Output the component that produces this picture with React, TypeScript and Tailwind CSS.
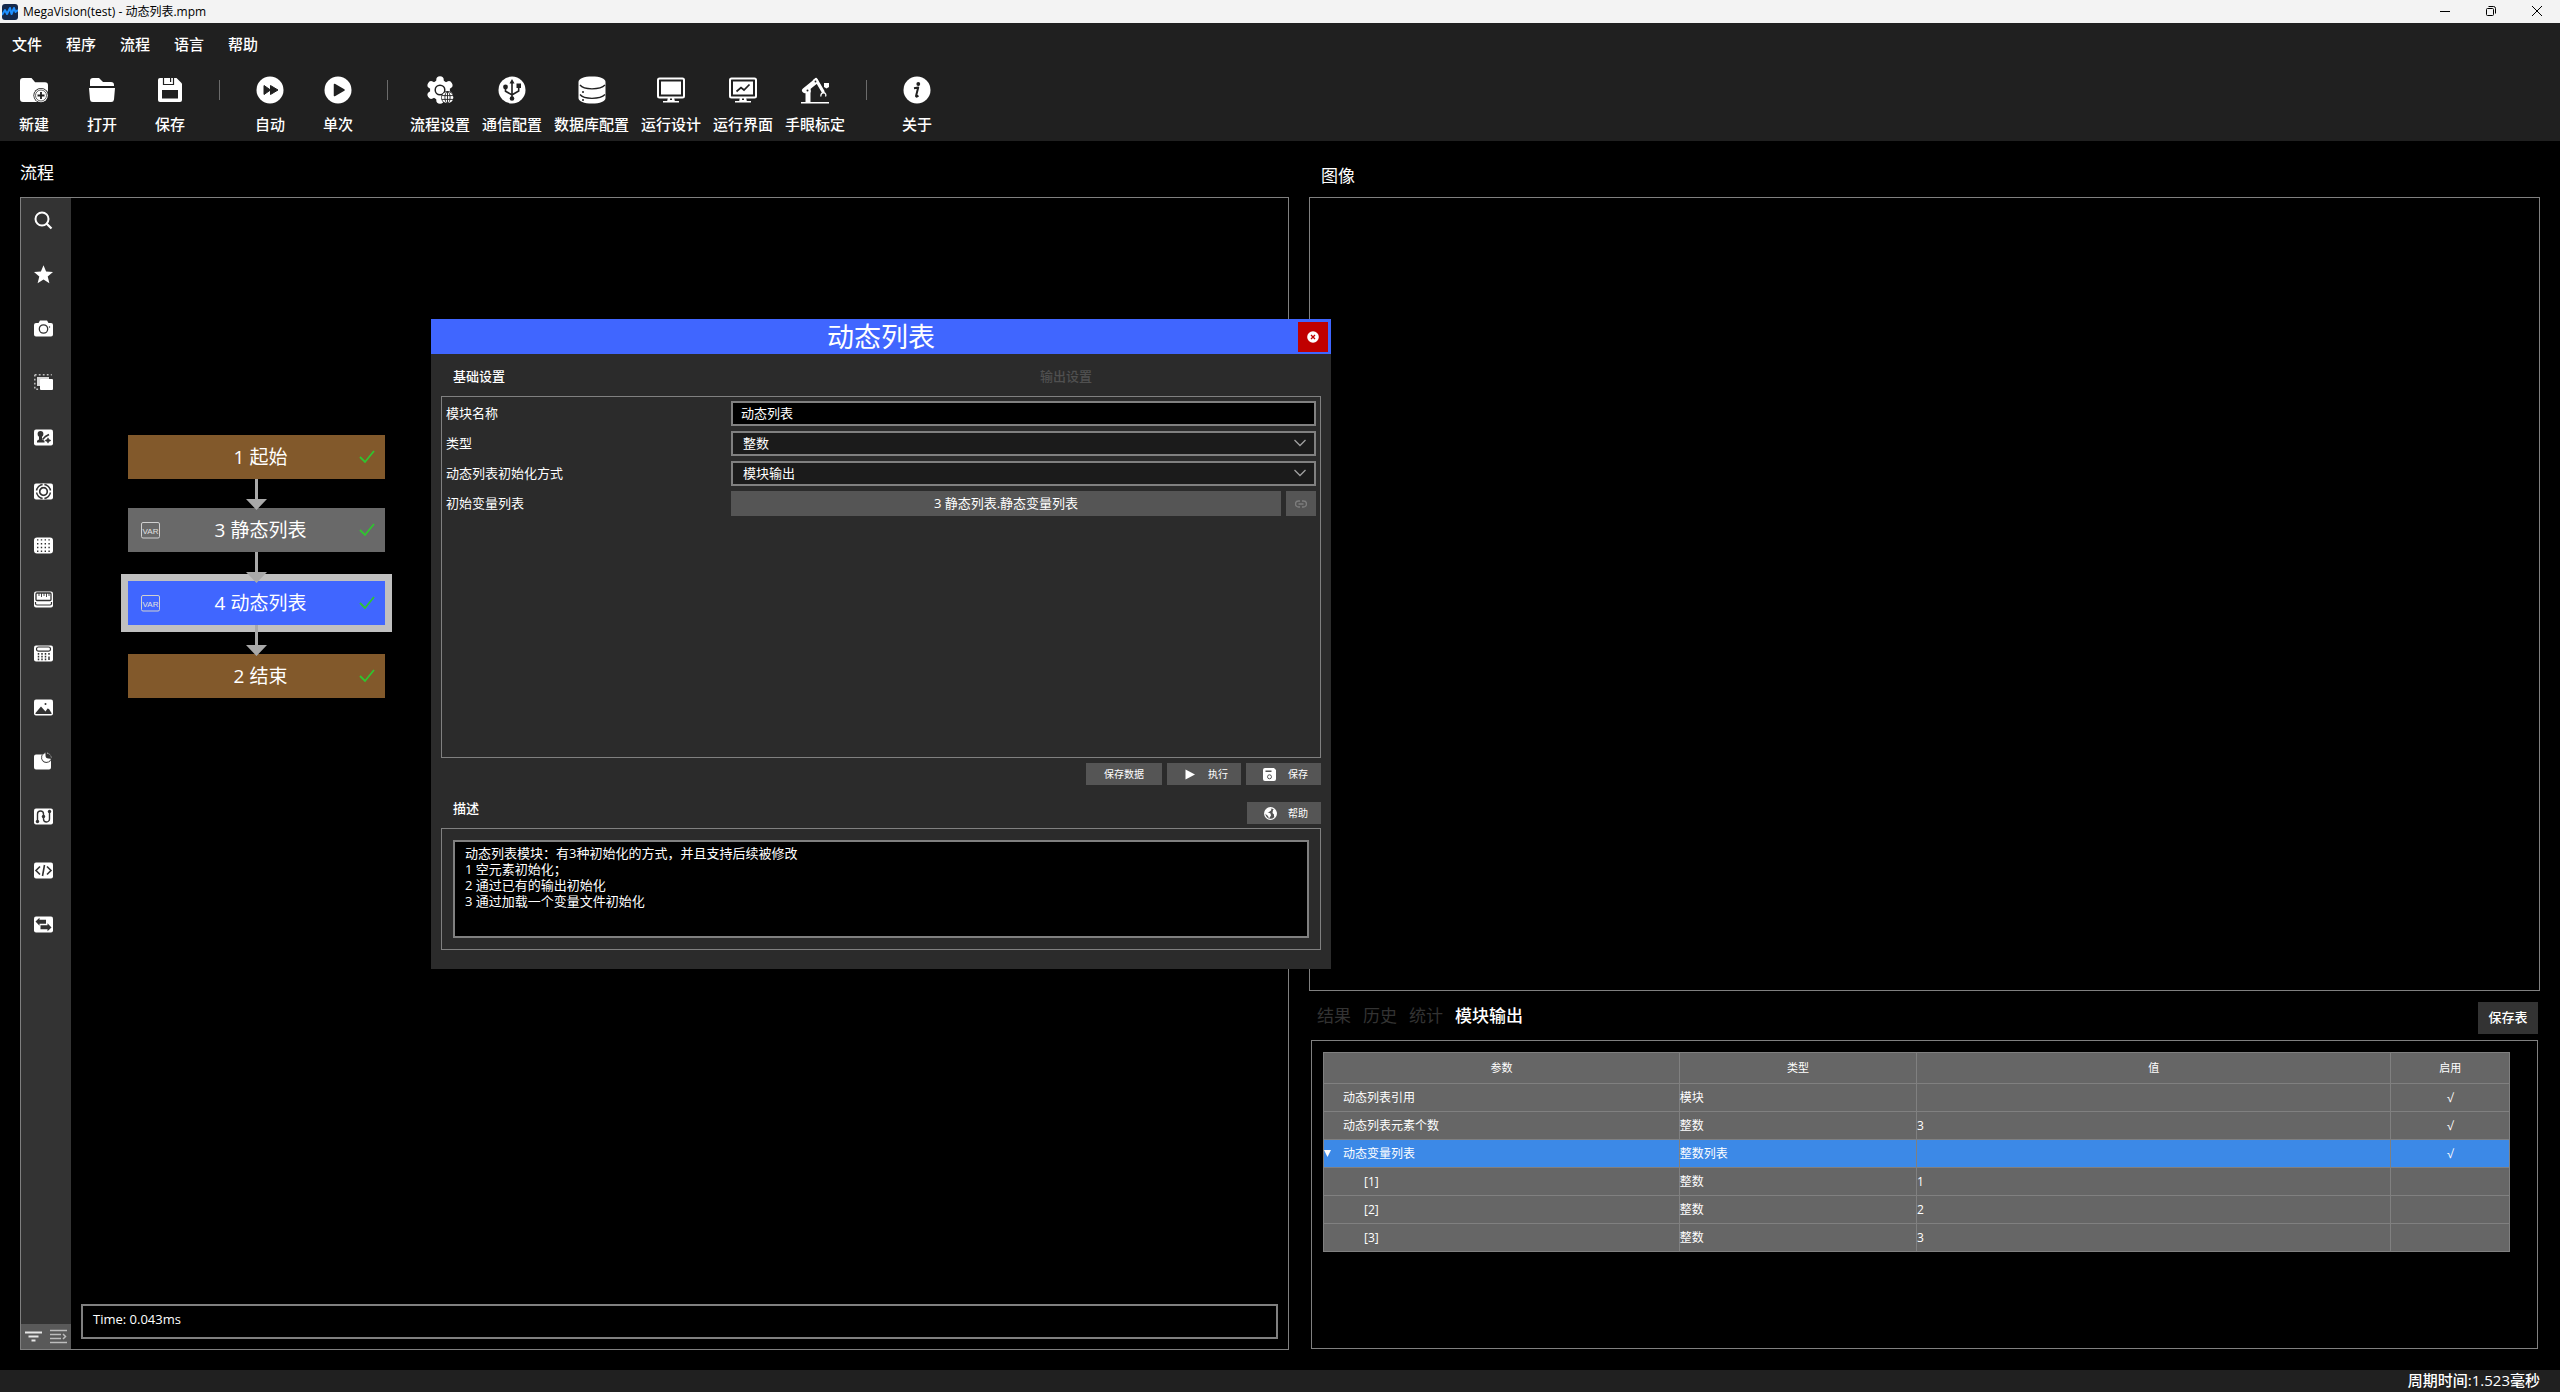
import React from "react";

const BAR = "#202020";
const SIDE = "#333333";

/* ---------- Toolbar icons (28 x 28) ---------- */

function ToolSvg({ children }: { children: React.ReactNode }) {
  return (
    <svg viewBox="0 0 28 28" className="size-7" fill="white" aria-hidden="true">
      {children}
    </svg>
  );
}

const NewIcon = (
  <ToolSvg>
    <path d="M3 2h8.5l3.600 4.200H25a3 3 0 0 1 3 3V26H3a3 3 0 0 1-3-3V5a3 3 0 0 1 3-3z" />
    <path d="M25 24.500L28 22v6h-6z" fill={BAR} />
    <circle cx="21" cy="19.500" r="7.600" fill={BAR} />
    <circle cx="21" cy="19.500" r="6.800" />
    <circle cx="21" cy="19.500" r="5.500" fill="white" stroke={BAR} strokeWidth="0.700" />
    <path d="M21 16v7M17.500 19.500h7" stroke={BAR} strokeWidth="1.800" />
  </ToolSvg>
);

const OpenIcon = (
  <ToolSvg>
    <path d="M2 10V5a3 3 0 0 1 3-3h6l4 4h8a3 3 0 0 1 3 3v1z" />
    <path d="M1 12h26l-1 11.500a2.800 2.800 0 0 1-2.800 2.500H4.800A2.800 2.800 0 0 1 2 23.500z" />
  </ToolSvg>
);

const SaveIcon = (
  <ToolSvg>
    <path d="M2 4a2 2 0 0 1 2-2h16.500L26 7.500V24a2 2 0 0 1-2 2H4a2 2 0 0 1-2-2z" />
    <path d="M7.500 2v6.500h10V2" fill="none" stroke={BAR} strokeWidth="1.200" />
    <rect x="14" y="2" width="1.200" height="4" fill={BAR} />
    <rect x="6" y="14" width="16" height="8.500" fill={BAR} />
  </ToolSvg>
);

const AutoIcon = (
  <ToolSvg>
    <circle cx="14" cy="14" r="13.500" />
    <path
      d="M8 9.500l6.500 4.500L8 18.500zM14.500 9.500L22 14l-7.500 4.500z"
      fill={BAR}
      stroke={BAR}
      strokeLinejoin="round"
    />
  </ToolSvg>
);

const OnceIcon = (
  <ToolSvg>
    <circle cx="14" cy="14" r="13.500" />
    <path d="M10.500 8.500L20 14l-9.500 5.500z" fill={BAR} stroke={BAR} strokeLinejoin="round" strokeWidth="1.500" />
  </ToolSvg>
);

const FlowSetIcon = (
  <ToolSvg>
    <circle cx="14" cy="14" r="10" />
    <g stroke="white" strokeWidth="7.500" strokeLinecap="round">
      <path d="M14 4v20M5.300 9l17.400 10M22.700 9L5.300 19" />
    </g>
    <circle cx="14" cy="14" r="4.800" stroke={BAR} strokeWidth="1.500" />
    <circle cx="21.500" cy="21.500" r="6.500" fill={BAR} />
    <circle cx="21.500" cy="21.500" r="5.800" />
    <g fill="none" stroke={BAR} strokeWidth="0.900">
      <ellipse cx="21.500" cy="21.500" rx="2.600" ry="5.800" />
      <path d="M21.500 15.700v11.600M16 19.600h11M16 23.400h11" />
    </g>
  </ToolSvg>
);

const CommIcon = (
  <ToolSvg>
    <circle cx="14" cy="14" r="13.500" />
    <g fill={BAR}>
      <circle cx="14" cy="22.500" r="2.300" />
      <path d="M14 3l2.500 4.500h-5z" />
      <circle cx="7.500" cy="11" r="2.400" />
      <rect x="18.500" y="7.500" width="4.500" height="4.500" />
    </g>
    <path
      d="M14 22V6M7.500 12v3.200l6.300 3.600M20.700 11v4l-6.500 3.800"
      fill="none"
      stroke={BAR}
      strokeWidth="1.600"
    />
  </ToolSvg>
);

const DbIcon = (
  <ToolSvg>
    <path d="M.5 6C.5 2.500 6 .5 14 .5S27.500 2.500 27.500 6v16c0 3.500-5.500 5.500-13.500 5.500S.5 25.500.5 22z" />
    <path
      d="M2 9c2 2.700 6 3.800 12 3.800S24.500 11.700 27 9M2 18.500c2 2.700 6 3.800 12 3.800s10.500-1.100 13-3.800"
      fill="none"
      stroke={BAR}
      strokeWidth="1.300"
    />
    <circle cx="5" cy="16" r="1" fill={BAR} />
    <circle cx="5" cy="24" r="1" fill={BAR} />
  </ToolSvg>
);

const DesignIcon = (
  <ToolSvg>
    <rect x="1" y="2.500" width="26" height="19" rx="1.500" fill="none" stroke="white" strokeWidth="2" />
    <rect x="4" y="5.500" width="20" height="13" />
    <path d="M11 21h6l.8 4H22v1.500H6V25h4.200z" />
    <rect x="13" y="22.500" width="2" height="1.500" fill={BAR} />
  </ToolSvg>
);

const ScreenIcon = (
  <ToolSvg>
    <rect x="1" y="2.500" width="26" height="19" rx="1.500" fill="none" stroke="white" strokeWidth="2" />
    <rect x="4" y="5.500" width="20" height="13" />
    <path d="M7.500 15.500l4.500-4 3 2.500 5.500-5.500" fill="none" stroke={BAR} strokeWidth="1.700" />
    <path d="M11 21h6l.8 4H22v1.500H6V25h4.200z" />
    <rect x="13" y="22.500" width="2" height="1.500" fill={BAR} />
  </ToolSvg>
);

const RobotIcon = (
  <ToolSvg>
    <rect x="0" y="26" width="28" height="1.500" />
    <path d="M4.500 26V15h5v11z" />
    <path d="M3.500 14.500L14 6" stroke="white" strokeWidth="5" strokeLinecap="round" />
    <path d="M15 3.500l7 12" stroke="white" strokeWidth="3.200" strokeLinecap="round" />
    <circle cx="6.500" cy="14.500" r="3.300" />
    <circle cx="14.500" cy="5.500" r="2.800" />
    <circle cx="6.500" cy="14.500" r="1" fill={BAR} />
    <circle cx="14.500" cy="5.500" r="0.900" fill={BAR} />
    <path d="M22.500 16.500c-2 .5-3 2-2.500 4M22.500 16.500c2 .5 3 2 2 4" fill="none" stroke="white" strokeWidth="1.300" />
    <path d="M23 7h5v4l-2.500 1.500L23 11z" />
  </ToolSvg>
);

const AboutIcon = (
  <ToolSvg>
    <circle cx="14" cy="14" r="13.500" />
    <circle cx="15.300" cy="8" r="1.900" fill={BAR} />
    <path
      d="M11 12.200l4.200-.7-2.100 8.200c-.3 1.300.7 1.300 2.300-.2"
      fill="none"
      stroke={BAR}
      strokeWidth="2"
      strokeLinejoin="round"
    />
  </ToolSvg>
);

/* ---------- Sidebar icons (19 x 19) ---------- */

function SideSvg({ children }: { children: React.ReactNode }) {
  return (
    <svg viewBox="0 0 19 19" className="size-[19px]" fill="white" aria-hidden="true">
      {children}
    </svg>
  );
}

const Plate = <rect x="0" y="1.500" width="19" height="16" rx="2" />;

const sideTools: { name: string; icon: React.ReactNode }[] = [
  {
    name: "搜索",
    icon: (
      <SideSvg>
        <circle cx="8" cy="8" r="6.500" fill="none" stroke="white" strokeWidth="2" />
        <path d="M12.500 12.500l5 5" stroke="white" strokeWidth="2.200" />
      </SideSvg>
    ),
  },
  {
    name: "收藏",
    icon: (
      <SideSvg>
        <path d="M9.500.3l2.600 6.300 6.900.5-5.300 4.400 1.700 6.800-5.900-3.700-5.900 3.700 1.700-6.800L0 7.100l6.900-.5z" />
      </SideSvg>
    ),
  },
  {
    name: "相机",
    icon: (
      <SideSvg>
        <path d="M2 4h2.500L6 1.500h7L14.500 4H17a2 2 0 0 1 2 2v9.500a2 2 0 0 1-2 2H2a2 2 0 0 1-2-2V6a2 2 0 0 1 2-2z" />
        <circle cx="9.500" cy="10" r="4.200" fill="none" stroke={SIDE} strokeWidth="1.300" />
        <circle cx="15.500" cy="8" r="0.700" fill={SIDE} />
      </SideSvg>
    ),
  },
  {
    name: "区域",
    icon: (
      <SideSvg>
        <path
          d="M.8 1.800h17M.8 1.800v14.500h5"
          fill="none"
          stroke="#bdbdbd"
          strokeWidth="1.500"
          strokeDasharray="1.800 2.200"
        />
        <rect x="3" y="4" width="12" height="9" fill="#d8d8d8" />
        <rect x="6" y="6" width="13" height="11" rx="1" />
      </SideSvg>
    ),
  },
  {
    name: "标定",
    icon: (
      <SideSvg>
        {Plate}
        <circle cx="6.500" cy="6" r="2.900" fill={SIDE} />
        <path d="M5 8h3v3.500l2.500 1.200V14.500H3v-1.800L5 11.500z" fill={SIDE} />
        <path d="M8.500 11.500l3-3 3.500-2" fill="none" stroke={SIDE} strokeWidth="1.600" />
        <path d="M14 9.800l1 1.800 2 .9-2 .9-1 1.800-1-1.800-2-.9 2-.9z" fill={SIDE} stroke={SIDE} strokeWidth="0.500" />
      </SideSvg>
    ),
  },
  {
    name: "定位",
    icon: (
      <SideSvg>
        {Plate}
        <circle cx="9.500" cy="9.500" r="7" fill="none" stroke={SIDE} strokeWidth="1.500" />
        <circle cx="9.500" cy="9.500" r="3.800" fill="none" stroke={SIDE} strokeWidth="1.700" />
        <path d="M9.500 1.500v3M9.500 14.500v3M1 9.500h3.500M14.500 9.500H18" stroke="white" strokeWidth="1.800" />
      </SideSvg>
    ),
  },
  {
    name: "阵列",
    icon: (
      <SideSvg>
        <rect x="0" y="1.500" width="19" height="16" rx="3" />
        <g stroke={SIDE} strokeWidth="1.400" strokeDasharray="1.400 2.400">
          <path d="M3 3.900h14M3 7.700h14M3 11.500h14M3 15.300h14" />
        </g>
      </SideSvg>
    ),
  },
  {
    name: "测量",
    icon: (
      <SideSvg>
        {Plate}
        <rect x="2" y="3" width="15" height="7.500" rx="1" fill="none" stroke={SIDE} strokeWidth="1.300" />
        <path d="M5 3v3M7.500 3v4M10 3v3M12.500 3v4M15 3v3" stroke={SIDE} strokeWidth="0.900" />
        <path d="M1.500 12v1.500q0 1.500 1.500 1.500h13q1.500 0 1.500-1.500V12" fill="none" stroke={SIDE} strokeWidth="1.200" />
      </SideSvg>
    ),
  },
  {
    name: "计算",
    icon: (
      <SideSvg>
        {Plate}
        <rect x="2.500" y="3" width="14" height="4.200" rx="2" fill="none" stroke={SIDE} strokeWidth="1.200" />
        <path
          d="M4.500 9v7.500M8 9v7.500M11.500 9v7.500M15 9v2.500"
          stroke={SIDE}
          strokeWidth="1.500"
          strokeDasharray="1.700 1.100"
        />
        <path d="M15 12.500v3.500" stroke={SIDE} strokeWidth="1.500" />
      </SideSvg>
    ),
  },
  {
    name: "图像",
    icon: (
      <SideSvg>
        {Plate}
        <path d="M1.500 15l5.500-6.500 4.500 5 2-3 1.500.5 2.500 4v1H1.500z" fill={SIDE} />
        <circle cx="11.500" cy="6" r="1" fill={SIDE} />
      </SideSvg>
    ),
  },
  {
    name: "缺陷",
    icon: (
      <SideSvg>
        <path d="M2 2.500h6a4.800 4.800 0 0 0 9 6v7a2 2 0 0 1-2 2H2a2 2 0 0 1-2-2v-11a2 2 0 0 1 2-2z" />
        <circle cx="12.500" cy="5.500" r="4.600" fill="white" stroke="#9a9a9a" strokeWidth="1" strokeDasharray="1.500 1.200" />
        <path d="M11.500.5h7v6.500l-4-.5q-3 0-3-3z" fill={SIDE} />
        <path d="M13 1.200q3.500.5 4.300 4.300" fill="none" stroke="#bdbdbd" strokeDasharray="1.500 1.200" />
      </SideSvg>
    ),
  },
  {
    name: "流程",
    icon: (
      <SideSvg>
        {Plate}
        <path
          d="M3.500 14.500V7a3 3 0 0 1 6 0v5a3 3 0 0 0 6 0V4.500"
          fill="none"
          stroke={SIDE}
          strokeWidth="1.400"
        />
        <circle cx="3.500" cy="14.500" r="1.700" fill={SIDE} />
        <circle cx="9.500" cy="9.500" r="1.700" fill={SIDE} />
        <circle cx="15.500" cy="4.500" r="1.700" fill={SIDE} />
      </SideSvg>
    ),
  },
  {
    name: "脚本",
    icon: (
      <SideSvg>
        {Plate}
        <path d="M6 5.500l-4 4 4 4M13 5.500l4 4-4 4M10.500 4l-2 11" fill="none" stroke={SIDE} strokeWidth="1.600" />
      </SideSvg>
    ),
  },
  {
    name: "通信",
    icon: (
      <SideSvg>
        {Plate}
        <path d="M1.500 6.500l4-3.800v2h6.500v4H5.500v2zM17.500 12.500l-4 3.800v-2H6.500v-4h7v-2z" fill={SIDE} />
      </SideSvg>
    ),
  },
];

/* ---------- Menu and toolbar ---------- */

const menus = ["文件", "程序", "流程", "语言", "帮助"];

const toolGroups = [
  [
    { label: "新建", icon: NewIcon },
    { label: "打开", icon: OpenIcon },
    { label: "保存", icon: SaveIcon },
  ],
  [
    { label: "自动", icon: AutoIcon },
    { label: "单次", icon: OnceIcon },
  ],
  [
    { label: "流程设置", icon: FlowSetIcon },
    { label: "通信配置", icon: CommIcon },
    { label: "数据库配置", icon: DbIcon },
    { label: "运行设计", icon: DesignIcon },
    { label: "运行界面", icon: ScreenIcon },
    { label: "手眼标定", icon: RobotIcon },
  ],
  [{ label: "关于", icon: AboutIcon }],
];

function TitleBar() {
  return (
    <div className="flex h-[23px] shrink-0 items-center bg-[#f3f3f3] pl-0.5 text-xs text-black">
      <svg viewBox="0 0 16 16" className="size-4" aria-hidden="true">
        <rect width="16" height="16" rx="3" fill="#15294b" />
        <path
          d="M0 11l3-5 2 4 3-6 1.500 6L12 4l1.500 4L16 6"
          fill="none"
          stroke="#1e90ff"
          strokeWidth="2"
          strokeLinejoin="round"
        />
      </svg>
      <span className="ml-[5px]">MegaVision(test) - 动态列表.mpm</span>
      <div className="ml-auto flex h-full pb-0.5">
        <button aria-label="最小化" className="flex w-[46px] items-center justify-center">
          <svg viewBox="0 0 10 10" className="size-2.5" fill="none" stroke="black">
            <path d="M0 5.500h10" />
          </svg>
        </button>
        <button aria-label="还原" className="flex w-[46px] items-center justify-center">
          <svg viewBox="0 0 10 10" className="size-2.5" fill="none" stroke="black">
            <rect x="0.500" y="2.500" width="7" height="7" rx="1" />
            <path d="M2.500.5h5a2 2 0 0 1 2 2v5" />
          </svg>
        </button>
        <button aria-label="关闭" className="flex w-[46px] items-center justify-center">
          <svg viewBox="0 0 10 10" className="size-2.5" fill="none" stroke="black">
            <path d="M0 0l10 10M10 0L0 10" />
          </svg>
        </button>
      </div>
    </div>
  );
}

function Header() {
  return (
    <header className="h-[118px] shrink-0 bg-[#202020] text-[15px] font-medium leading-6">
      <nav className="flex gap-6 pl-3 pt-[9px]">
        {menus.map((m) => (
          <button key={m}>{m}</button>
        ))}
      </nav>
      <div className="flex items-start gap-3 pl-1.5 pt-5">
        {toolGroups.map((group, i) => (
          <React.Fragment key={i}>
            {i > 0 && <div className="ml-[9px] mr-2.5 mt-1 h-5 w-px bg-[#6b6b6b]" />}
            {group.map((t) => (
              <button key={t.label} className="flex min-w-14 flex-col items-center gap-2">
                {t.icon}
                {t.label}
              </button>
            ))}
          </React.Fragment>
        ))}
      </div>
    </header>
  );
}

/* ---------- Flow chart ---------- */

const nodes = [
  { label: "1 起始", kind: "end" },
  { label: "3 静态列表", kind: "module" },
  { label: "4 动态列表", kind: "active" },
  { label: "2 结束", kind: "end" },
];

const nodeClass: Record<string, string> = {
  end: "bg-[#82592b]",
  module: "bg-[#696969]",
  active: "bg-[#4066ff] ring-7 ring-[#c0c0c0]",
};

function FlowNode({ label, kind }: { label: string; kind: string }) {
  return (
    <div className={`relative flex h-11 w-[257px] items-center justify-center pl-2 text-[19px] ${nodeClass[kind]}`}>
      {kind !== "end" && (
        <svg viewBox="0 0 19 17" className="absolute left-[13px] h-[17px] w-[19px]" aria-hidden="true">
          <rect x="0.500" y="0.500" width="18" height="15.500" rx="1.500" fill="none" stroke="#d0d0d0" />
          <text
            x="9.500"
            y="12"
            textAnchor="middle"
            fill="#e0e0e0"
            className='font-["Liberation_Sans",sans-serif] text-[8px]'
          >
            VAR
          </text>
        </svg>
      )}
      {label}
      <svg viewBox="0 0 16 14" className="absolute right-2.5 h-3.5 w-4" aria-hidden="true">
        <path d="M1 7l5 5L15 1" fill="none" stroke="#2fc52f" strokeWidth="1.800" />
      </svg>
    </div>
  );
}

function FlowArrow() {
  return (
    <svg viewBox="0 0 21 31" className="relative z-10 -mb-0.5 h-[31px] w-[21px]" fill="#a9a9a9" aria-hidden="true">
      <path d="M9 0h3v20h9L10.500 31 0 20h9z" />
    </svg>
  );
}

function FlowPanel() {
  return (
    <section className="flex min-w-0 flex-[1269] flex-col">
      <h2 className="h-14 pt-5 text-[17px] leading-6">流程</h2>
      <div className="flex flex-1 border border-[#808080]">
        <aside className="flex w-[50px] flex-col justify-between bg-[#333333]">
          <div className="mt-[13px] flex h-[723px] flex-col items-start justify-between pl-[13px]">
            {sideTools.map((t) => (
              <button key={t.name} aria-label={t.name}>
                {t.icon}
              </button>
            ))}
          </div>
          <div className="flex h-[25px] items-center justify-around bg-[#595959]">
            <button aria-label="筛选">
              <svg viewBox="0 0 17 13" className="h-[13px] w-[17px]" fill="none" stroke="#e6e6e6" strokeWidth="2">
                <path d="M0 2.500h17M3.500 6.500h10M6.500 10.500h4" />
              </svg>
            </button>
            <button aria-label="展开">
              <svg viewBox="0 0 17 15" className="h-[15px] w-[17px]" fill="none" stroke="#bdbdbd" strokeWidth="1.500">
                <path d="M0 1.500h17M0 5.500h11M0 9.500h11M0 13.500h17M13 5l2.500 2.500L13 10" />
              </svg>
            </button>
          </div>
        </aside>
        <div className="flex flex-1 flex-col justify-between p-2.5">
          <div className="ml-[47px] mt-[227px] flex w-[257px] flex-col items-center">
            {nodes.map((n, i) => (
              <React.Fragment key={n.label}>
                {i > 0 && <FlowArrow />}
                <FlowNode label={n.label} kind={n.kind} />
              </React.Fragment>
            ))}
          </div>
          <div className="h-[35px] border-2 border-[#808080] px-2.5 pt-[3px] text-[13px] font-medium leading-5">
            Time: 0.043ms
          </div>
        </div>
      </div>
    </section>
  );
}

/* ---------- Image + output ---------- */

const outputTabs = ["结果", "历史", "统计", "模块输出"];

const rows = [
  { name: "动态列表引用", type: "模块", value: "", on: true },
  { name: "动态列表元素个数", type: "整数", value: "3", on: true },
  { name: "动态变量列表", type: "整数列表", value: "", on: true, open: true },
  { name: "[1]", type: "整数", value: "1", child: true },
  { name: "[2]", type: "整数", value: "2", child: true },
  { name: "[3]", type: "整数", value: "3", child: true },
];

function OutputTable() {
  return (
    <table className="w-full table-fixed border-collapse text-xs [&_td]:border [&_td]:border-[#808080] [&_th]:border [&_th]:border-[#808080]">
      <colgroup>
        <col className="w-[30%]" />
        <col className="w-[20%]" />
        <col className="w-[40%]" />
        <col className="w-[10%]" />
      </colgroup>
      <thead>
        <tr className="h-[31px] bg-[#666666] text-[11px]">
          <th className="font-normal">参数</th>
          <th className="font-normal">类型</th>
          <th className="font-normal">值</th>
          <th className="font-normal">启用</th>
        </tr>
      </thead>
      <tbody>
        {rows.map((r) => (
          <tr key={r.name} className={r.open ? "h-7 bg-[#3c89e7]" : "h-7 bg-[#666666]"}>
            <td className={r.child ? "pl-10" : "p-0"}>
              <div className="flex items-center">
                {!r.child && (
                  <span className="w-[19px]">
                    {r.open && (
                      <svg viewBox="0 0 7 7" className="size-[7px]" fill="white" aria-hidden="true">
                        <path d="M0 0h7L3.500 7z" />
                      </svg>
                    )}
                  </span>
                )}
                {r.name}
              </div>
            </td>
            <td className="p-0">{r.type}</td>
            <td className="p-0">{r.value}</td>
            <td className="p-0 text-center">{r.on ? "√" : ""}</td>
          </tr>
        ))}
      </tbody>
    </table>
  );
}

function ResultPanel() {
  return (
    <section className="flex min-w-0 flex-[1231] flex-col pb-px">
      <h2 className="h-14 pl-3 pt-[23px] text-[17px] leading-6">图像</h2>
      <div className="flex-1 border border-[#808080]" />
      <div className="mx-0.5 flex h-[49px] items-center justify-between">
        <div className="flex gap-3 pl-1.5 text-[17px]">
          {outputTabs.map((t) => (
            <button key={t} className={t === "模块输出" ? "font-medium text-white" : "text-[#333333]"}>
              {t}
            </button>
          ))}
        </div>
        <button className="mt-1 h-8 w-[60px] bg-[#333333] text-[13px] font-medium">保存表</button>
      </div>
      <div className="mx-0.5 h-[309px] border border-[#808080] pl-[11px] pr-[27px] pt-[11px]">
        <OutputTable />
      </div>
    </section>
  );
}

/* ---------- Module dialog ---------- */

function SelectBox({ id, value }: { id: string; value: string }) {
  return (
    <div className="relative flex-1">
      <select
        id={id}
        defaultValue={value}
        className="block h-[25px] w-full appearance-none border-2 border-[#808080] bg-[#1b1b1b] px-2.5 text-[13px]"
      >
        <option>{value}</option>
      </select>
      <svg viewBox="0 0 12 8" className="pointer-events-none absolute right-2.5 top-2 h-2 w-3" aria-hidden="true">
        <path d="M.5 1L6 6.500 11.500 1" fill="none" stroke="#a0a0a0" strokeWidth="1.300" />
      </svg>
    </div>
  );
}

const smallBtn = "flex h-[22px] items-center bg-[#555555] text-[10px]";

function ModuleDialog() {
  return (
    <div role="dialog" aria-label="动态列表" className="absolute left-[431px] top-[319px] z-20 w-[900px] bg-[#2b2b2b] pb-[19px] text-[13px]">
      <div className="relative flex h-[35px] items-center justify-center bg-[#4066ff]">
        <h1 className="text-[27px] leading-[35px]">动态列表</h1>
        <button aria-label="关闭" className="absolute right-[3px] top-[3px] flex size-[30px] items-center justify-center bg-[#c00000]">
          <svg viewBox="0 0 12 12" className="size-3" aria-hidden="true">
            <circle cx="6" cy="6" r="5.800" fill="white" />
            <path d="M4 4l4 4M8 4L4 8" stroke="#c00000" strokeWidth="1.300" />
          </svg>
        </button>
      </div>

      <div className="px-2.5">
        <div className="grid h-[42px] grid-cols-[587px_1fr] items-center pl-3 pt-1">
          <button className="justify-self-start font-medium">基础设置</button>
          <button className="justify-self-start font-medium text-[#505050]">输出设置</button>
        </div>

        <div className="flex h-[362px] flex-col gap-[5px] border border-[#808080] p-1">
          <div className="flex items-center">
            <label htmlFor="mod-name" className="w-[285px]">模块名称</label>
            <input
              id="mod-name"
              defaultValue="动态列表"
              className="h-[25px] min-w-0 flex-1 border-2 border-[#808080] bg-black px-2 pb-0.5"
            />
          </div>
          <div className="flex items-center">
            <label htmlFor="mod-type" className="w-[285px]">类型</label>
            <SelectBox id="mod-type" value="整数" />
          </div>
          <div className="flex items-center">
            <label htmlFor="mod-init" className="w-[285px]">动态列表初始化方式</label>
            <SelectBox id="mod-init" value="模块输出" />
          </div>
          <div className="flex items-center">
            <label htmlFor="mod-vars" className="w-[285px]">初始变量列表</label>
            <button id="mod-vars" className="h-[25px] flex-1 bg-[#555555]">3 静态列表.静态变量列表</button>
            <button aria-label="链接" className="ml-[5px] flex h-[25px] w-[30px] items-center justify-center bg-[#555555]">
              <svg viewBox="0 0 12 8" className="h-2 w-3" fill="none" stroke="#7d7d7d" strokeWidth="1.400" aria-hidden="true">
                <path d="M5 1H3.500a3 3 0 0 0 0 6H5M7 1h1.500a3 3 0 0 1 0 6H7M3.500 4h5" />
              </svg>
            </button>
          </div>
        </div>

        <div className="mt-[5px] flex justify-end gap-[5px]">
          <button className={`${smallBtn} w-[76px] justify-center`}>保存数据</button>
          <button className={`${smallBtn} w-[74px] justify-between pl-[18px] pr-[13px]`}>
            <svg viewBox="0 0 10 11" className="h-[11px] w-2.5" fill="white" aria-hidden="true">
              <path d="M.5.5L10 5.500.5 10.500z" />
            </svg>
            执行
          </button>
          <button className={`${smallBtn} w-[75px] justify-between pl-[17px] pr-[13px]`}>
            <svg viewBox="0 0 13 13" className="size-[13px]" fill="white" aria-hidden="true">
              <path d="M2 0h9l2 2v9a2 2 0 0 1-2 2H2a2 2 0 0 1-2-2V2a2 2 0 0 1 2-2z" />
              <rect x="2.500" y="2.500" width="6" height="1.500" fill="#555555" />
              <circle cx="6.500" cy="8.800" r="2" fill="none" stroke="#555555" />
            </svg>
            保存
          </button>
        </div>

        <div className="mt-[17px] flex h-[26px] items-start justify-between pl-3">
          <h3 className="font-medium leading-3">描述</h3>
          <button className={`${smallBtn} w-[74px] justify-between pl-[17px] pr-[13px]`}>
            <svg viewBox="0 0 13 13" className="size-[13px]" aria-hidden="true">
              <circle cx="6.500" cy="6.500" r="5.800" fill="none" stroke="white" strokeWidth="1.300" />
              <path d="M1 4l3.500-3 3 .3-.5 2.200-2 1.500H3.500l3 1.500L7 8.500 5 11.500 4 9 1 6.500zM9 3l1.500-1 2 3.500-.5 3.500-2 1V7.500L8.500 6z" fill="white" />
            </svg>
            帮助
          </button>
        </div>

        <div className="border border-[#808080] p-[11px]">
          <textarea
            aria-label="描述"
            readOnly
            className="block h-[98px] w-full resize-none overflow-hidden border-2 border-[#808080] bg-black px-2.5 py-[3px] leading-4"
            defaultValue={"动态列表模块：有3种初始化的方式，并且支持后续被修改\n1 空元素初始化；\n2 通过已有的输出初始化\n3 通过加载一个变量文件初始化"}
          />
        </div>
      </div>
    </div>
  );
}

export default function App() {
  return (
    <div className='relative flex min-h-screen flex-col bg-black font-["Open_Sans","Noto_Sans_CJK_SC",sans-serif] text-white'>
      <TitleBar />
      <Header />
      <main className="flex flex-1 gap-5 px-5 pb-5">
        <FlowPanel />
        <ResultPanel />
      </main>
      <footer className="flex h-[22px] shrink-0 items-start justify-end bg-[#202020] pr-5 text-[15px] font-medium leading-5">
        周期时间:1.523毫秒
      </footer>
      <ModuleDialog />
    </div>
  );
}
